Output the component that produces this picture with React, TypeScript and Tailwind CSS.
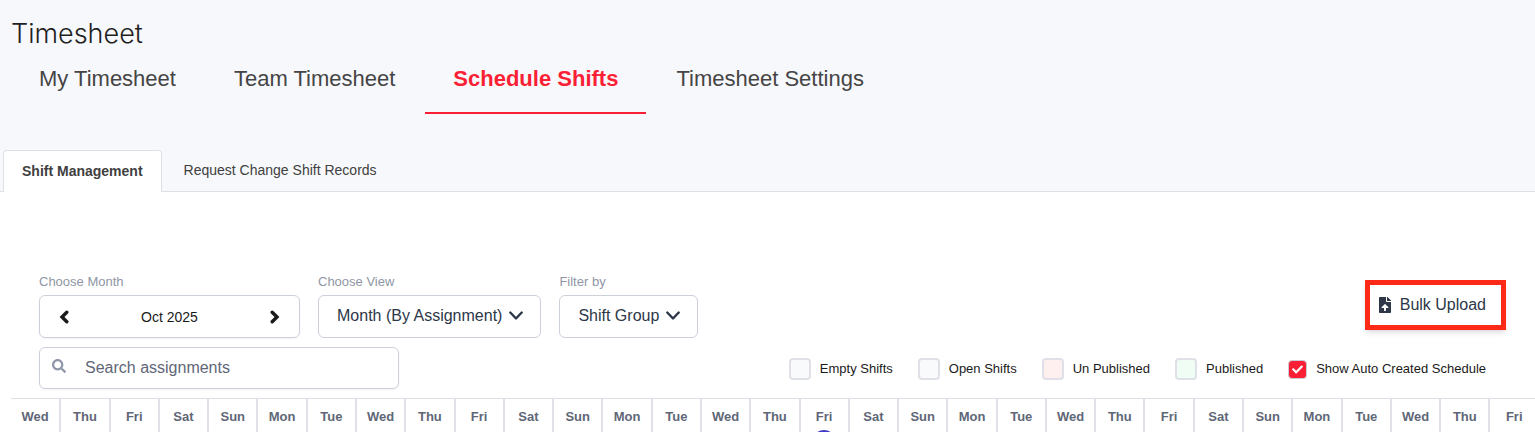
import React from "react";
import { FaCheck, FaSearch } from "react-icons/fa";

const tabs = ["My Timesheet", "Team Timesheet", "Schedule Shifts", "Timesheet Settings"];

const legend = [
  { label: "Empty Shifts", color: "bg-[#f8fafc]" },
  { label: "Open Shifts", color: "bg-[#f8fafc]" },
  { label: "Un Published", color: "bg-[#fff0f0]" },
  { label: "Published", color: "bg-[#effdf4]" },
];

const weekdays = ["Wed", "Thu", "Fri", "Sat", "Sun", "Mon", "Tue"];
const days = Array.from({ length: 31 }, (_, i) => weekdays[i % 7]);
const today = 17;

function Header() {
  return (
    <header className="bg-[#f7f8fc] pt-4">
      <h1 className="pl-[11px] font-['Inter'] font-light text-[27px] leading-9 text-[#1f1f1f]">
        Timesheet
      </h1>
      <nav className="flex gap-[2px] pl-[11px] text-[22px] leading-8 text-[#454545]">
        {tabs.map((tab) => (
          <a
            key={tab}
            href="#"
            className={
              tab === "Schedule Shifts"
                ? "px-7 pt-[11px] pb-[17px] border-b-2 border-[#fb1f35] font-bold text-[#fb1f35]"
                : "px-7 pt-[11px] pb-[17px] border-b-2 border-transparent"
            }
          >
            {tab}
          </a>
        ))}
      </nav>
      <div className="mt-9 flex border-b border-[#dee0e6] pl-[3px] text-sm text-[#404040]">
        <button className="-mb-px rounded-t border border-b-0 border-[#dee0e6] bg-white px-[18px] pt-[10px] pb-[11px] font-bold">
          Shift Management
        </button>
        <button className="px-[22px] pb-px">Request Change Shift Records</button>
      </div>
    </header>
  );
}

function Picker({ label, value }: { label: string; value: string }) {
  return (
    <div>
      <p className="text-[13px] leading-5 text-[#9096a5]">{label}</p>
      <button
        aria-label={label}
        className="mt-[3px] flex h-[43px] items-center gap-[7px] rounded-md border border-[#cbd0da] pr-[17px] pb-px pl-[18px] text-base text-[#2d3748]"
      >
        {value}
        <svg viewBox="0 0 14 10" className="h-[10px] w-[14px]" fill="none" stroke="currentColor" strokeWidth="2.4">
          <path d="M1.300 1.500 7 7.500l5.700-6" strokeLinecap="round" strokeLinejoin="round" />
        </svg>
      </button>
    </div>
  );
}

function Filters() {
  return (
    <div className="flex items-start gap-[18px]">
      <div>
        <p className="text-[13px] leading-5 text-[#9096a5]">Choose Month</p>
        <div className="mt-[3px] flex h-[43px] w-[261px] items-center justify-between rounded-md border border-[#cbd0da] px-[19px] text-sm text-[#1a1a1a] shadow-xs">
          <button aria-label="Previous month">
            <svg viewBox="0 0 10 14" className="h-[14px] w-[10px]" fill="none" stroke="currentColor" strokeWidth="3.4">
              <path d="M7.800 2.200 3 7l4.800 4.800" strokeLinecap="round" strokeLinejoin="miter" />
            </svg>
          </button>
          Oct 2025
          <button aria-label="Next month">
            <svg viewBox="0 0 10 14" className="h-[14px] w-[10px]" fill="none" stroke="currentColor" strokeWidth="3.4">
              <path d="M2.200 2.200 7 7l-4.800 4.800" strokeLinecap="round" strokeLinejoin="miter" />
            </svg>
          </button>
        </div>
      </div>
      <Picker label="Choose View" value="Month (By Assignment)" />
      <Picker label="Filter by" value="Shift Group" />
      <button className="mt-2 mr-[3px] ml-auto flex h-[50px] items-center gap-[9px] border-5 border-[#fe2a18] pr-[15px] pl-[9px] text-base text-[#2d3748] shadow-md">
        <svg viewBox="0 0 384 512" className="h-4 w-3" fill="currentColor">
          <path d="M224 136V0H24C10.700 0 0 10.700 0 24v464c0 13.300 10.700 24 24 24h336c13.300 0 24-10.700 24-24V160H248c-13.200 0-24-10.800-24-24zm65.200 216H224v80c0 8.800-7.200 16-16 16h-32c-8.800 0-16-7.200-16-16v-80H94.800c-14.300 0-21.400-17.300-11.300-27.400l96.400-95.700c6.700-6.600 17.400-6.600 24 0l96.400 95.700c10.200 10.100 3.100 27.400-11.100 27.400zM377 105L279.100 7c-4.500-4.500-10.600-7-17-7H256v128h128v-6.100c0-6.300-2.500-12.400-7-16.900z" />
        </svg>
        Bulk Upload
      </button>
    </div>
  );
}

function SearchAndLegend() {
  return (
    <div className="mt-[9px] flex items-center justify-between">
      <label className="flex h-[42px] w-[360px] items-center gap-[19px] rounded-md border border-[#cbd0da] px-3 shadow-xs">
        <FaSearch className="mb-1 size-3.5 shrink-0 text-[#8f97a8]" />
        <input
          type="text"
          aria-label="Search assignments"
          placeholder="Search assignments"
          className="min-w-0 flex-1 text-base outline-none placeholder:text-[#5f6777]"
        />
      </label>
      <div className="mr-[23px] flex items-center gap-[25px] pt-[2px] text-[13px] text-[#1a1a1a]">
        {legend.map((item) => (
          <div key={item.label} className="flex items-center gap-[9px]">
            <span className={`size-[22px] rounded border-2 border-[#e0e1e8] ${item.color}`} />
            {item.label}
          </div>
        ))}
        <label className="flex items-center gap-[9px]">
          <span className="grid place-items-center">
            <input
              type="checkbox"
              defaultChecked
              className="col-start-1 row-start-1 size-[19px] appearance-none rounded border border-[#c9ccd8] bg-white checked:bg-[#fb1f35]"
            />
            <FaCheck className="pointer-events-none col-start-1 row-start-1 size-[11px] text-white" />
          </span>
          Show Auto Created Schedule
        </label>
      </div>
    </div>
  );
}

function Calendar() {
  return (
    <div className="mt-[9px] overflow-hidden pl-[11px]">
      <table className="w-[calc(100%+5px)] table-fixed border-t border-[#dee0e6]">
        <thead>
          <tr>
            {days.map((day, i) => (
              <th
                key={i}
                className="h-[33px] border-r-2 border-[#e0e1e8] p-0 align-top text-[13px] font-bold text-[#5f6777]"
              >
                <div className="flex h-[33px] flex-col items-center overflow-hidden pt-2">
                  <span className="leading-5">{day}</span>
                  {i + 1 === today && (
                    <span className="mt-[3px] size-6 shrink-0 rounded-full bg-[#4338ca]" />
                  )}
                </div>
              </th>
            ))}
          </tr>
        </thead>
      </table>
    </div>
  );
}

export default function App() {
  return (
    <div className="min-h-screen overflow-hidden bg-white font-['Liberation_Sans',Arial,sans-serif]">
      <Header />
      <main className="pt-20">
        <div className="pr-[26px] pl-[39px]">
          <Filters />
          <SearchAndLegend />
        </div>
        <Calendar />
      </main>
    </div>
  );
}
